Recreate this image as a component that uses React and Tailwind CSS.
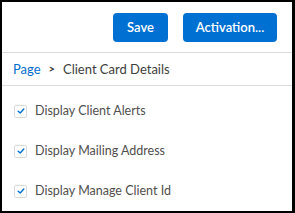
import React from "react";

function Check() {
  return (
    <span className="flex h-[13px] w-[13px] items-center justify-center rounded-[2px] border border-[#dddbda] bg-white">
      <svg viewBox="0 0 10 10" className="h-[8px] w-[8px]">
        <path d="M1.5 5.3 L4 7.5 L8.5 2.5" fill="none" stroke="#0070d2" strokeWidth="1.8" strokeLinecap="round" strokeLinejoin="round" />
      </svg>
    </span>
  );
}

const options = ["Display Client Alerts", "Display Mailing Address", "Display Manage Client Id"];

export default function App() {
  return (
    <div className="h-[213px] w-[295px] overflow-hidden border-2 border-r-[3px] border-black bg-white text-[13px] leading-[20px] text-[#3e3e3c] font-['Lato','Open_Sans',sans-serif]">
      <div className="flex h-[50px] items-center justify-end gap-[15px] pr-[15px]">
        <button className="h-[29px] w-[55px] rounded-[4px] bg-[#0070d2] font-semibold text-white">Save</button>
        <button className="h-[29px] w-[94px] rounded-[4px] bg-[#0070d2] font-semibold text-white">Activation...</button>
      </div>
      <div className="flex h-[34px] items-center border-y border-[#dddbda] pl-[11px]">
        <span className="text-[#006dcc]">Page</span>
        <span className="mx-[8px] text-[11px] font-bold">&gt;</span>
        <span>Client Card Details</span>
      </div>
      <div className="flex flex-col gap-[20px] pl-[12px] pt-[15px]">
        {options.map((o) => (
          <label key={o} className="flex items-center gap-[8px] text-[12.5px] text-[#514f4d]">
            <Check />
            <span>{o}</span>
          </label>
        ))}
      </div>
    </div>
  );
}
